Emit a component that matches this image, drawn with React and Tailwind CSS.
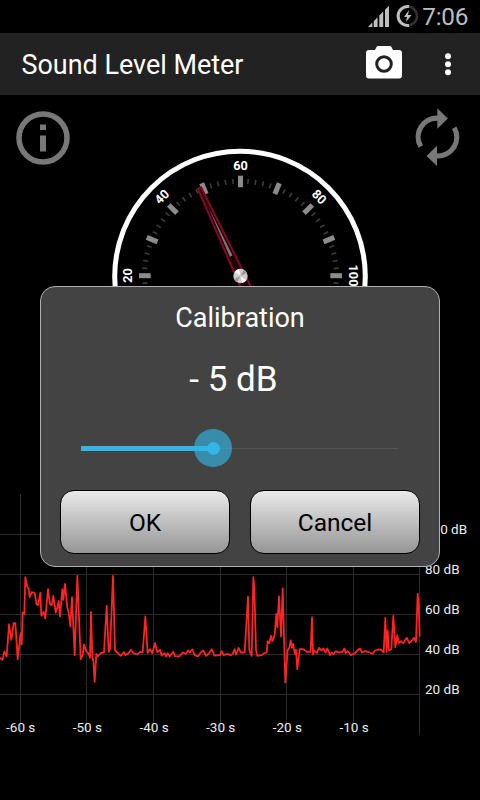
import React, { useState } from "react";

const TRACE =
    "0,292 8,298 13,273 20,288 27,192 34,238 41,188 46,188 53,296 62,218 65,252 68,156 73,160 76,50 82,80 86,84 89,110 95,95 104,98 110,132 114,134 121,97 124,166 131,154 136,174 144,86 150,132 155,134 160,106 167,156 172,140 176,122 180,168 187,86 190,118 195,70 202,142 206,155 211,198 216,110 224,284 232,46 242,296 248,284 252,252 258,270 266,280 270,292 273,154 277,290 280,300 284,364 289,280 293,288 302,278 312,276 320,136 326,274 330,266 339,46 345,270 352,276 362,286 372,275 376,284 384,280 393,268 400,278 412,282 420,274 428,276 436,168 443,278 450,266 457,278 465,248 472,275 480,268 485,285 494,278 498,288 503,278 509,288 520,274 525,287 538,288 548,276 558,280 564,270 570,276 577,267 584,284 594,288 602,276 610,270 618,286 626,280 635,266 643,285 660,284 665,272 671,284 682,280 692,284 698,280 704,266 708,282 716,262 722,276 734,276 744,108 748,268 755,286 760,50 763,80 768,268 772,286 785,284 792,278 800,276 803,242 808,248 813,226 817,242 824,224 829,160 832,200 837,108 843,228 848,84 856,366 863,268 868,262 872,240 876,262 879,250 885,280 888,268 892,326 899,266 910,266 920,274 932,274 936,170 939,282 943,270 950,278 957,262 964,270 970,264 977,276 982,264 990,284 996,276 1000,282 1008,272 1015,276 1028,274 1033,264 1037,278 1043,272 1053,284 1065,278 1072,270 1080,264 1086,276 1095,272 1110,276 1118,280 1125,270 1135,267 1144,268 1151,276 1156,172 1160,274 1163,210 1167,270 1174,266 1180,166 1186,260 1192,224 1196,248 1202,242 1210,248 1220,232 1228,248 1236,240 1242,232 1248,244 1253,100 1256,130 1259,228";

const StatusBar = () => {
    return (
        <div className="flex h-[33px] items-center justify-end pr-[12px] text-[#bebebe]">
            <svg width="55" height="33" viewBox="367 0 55 33">
                <path d="M368 27l4.300-4.400v4.400zM373.700 27v-5.800l3.900-3.900v9.700zM379.300 27v-11.500l3.900-3.900v15.400zM385 27v-17.200l4-4v21.200z" fill="#bebebe" />
                <circle cx="407.500" cy="16" r="9.500" fill="none" stroke="#333" strokeWidth="2.500" />
                <path d="M409 6.600A9.500 9.500 0 1 0 409 25.400" fill="none" stroke="#bebebe" strokeWidth="3" />
                <path d="M409 10l-5 7h3l-1 5 5.500-7h-3.500z" fill="#bebebe" />
            </svg>
            <span className="mt-px text-[24.300px] leading-none tracking-[-0.300px]">7:06</span>
        </div>
    );
};

const ActionBar = () => {
    return (
        <div className="flex h-[62px] items-center justify-between bg-[#222] pl-[21.500px]">
            <h1 className="mt-[2px] text-[26.950px] leading-none text-white">Sound Level Meter</h1>
            <svg width="120" height="62" viewBox="360 33 120 62">
                <path d="M369 50h6l1.500-3q.5-1 1.500-1h12q1 0 1.500 1l1.500 3h6q3 0 3 3v22.500q0 3-3 3h-30q-3 0-3-3v-22.500q0-3 3-3z" fill="#fff" />
                <circle cx="384" cy="64" r="7.300" fill="none" stroke="#222" strokeWidth="3" />
                <circle cx="448" cy="56.200" r="3" fill="#fff" />
                <circle cx="448" cy="64.200" r="3" fill="#fff" />
                <circle cx="448" cy="72.200" r="3" fill="#fff" />
            </svg>
        </div>
    );
};

const InfoIcon = () => (
    <svg width="54" height="54" viewBox="0 0 54 54">
        <circle cx="27" cy="27" r="24" fill="none" stroke="#787878" strokeWidth="5.500" />
        <path d="M24 13.500h6v5.500h-6zM24 24.500h6v16h-6z" fill="#787878" />
    </svg>
);

const SyncIcon = () => (
    <svg width="46" height="60" viewBox="414 107 46 60">
        <path
            d="M420.800 146.500A18.700 18.700 0 0 1 438.500 118.300M454.200 127.800A18.700 18.700 0 0 1 436.500 155.900"
            fill="none"
            stroke="#787878"
            strokeWidth="5.200"
        />
        <path d="M437.300 108.300l10.500 10.200-10.500 10.200zM437 145.700v20.400l-10.500-10.200z" fill="#787878" />
    </svg>
);

const Gauge = () => {
    const ticks = [];
    for (let i = -22; i <= 22; i++) {
        ticks.push({ angle: i * 4.5, major: i % 5 === 0 });
    }
    return (
        <svg className="h-[260px] w-[260px]" viewBox="110 146 260 260">
            <circle cx="240" cy="276.500" r="125.300" fill="none" stroke="#fff" strokeWidth="5" />
            <g transform="translate(240.500 275.700) scale(1.015 1)">
                {ticks.map(({ angle, major }) => (
                    <rect
                        key={angle}
                        x={major ? -2.5 : -0.8}
                        y={major ? -100 : -97}
                        width={major ? 5 : 1.6}
                        height={major ? 11.5 : 5}
                        fill={major ? "#8c8c8c" : "#3c3c3c"}
                        transform={`rotate(${angle})`}
                    />
                ))}
            </g>
            {[20, 40, 60, 80, 100].map((n) => (
                <text
                    key={n}
                    x="240.500"
                    y={170.3 - Math.abs(n - 60) * 0.08}
                    textAnchor="middle"
                    className="fill-white text-[12.700px] font-bold"
                    transform={`rotate(${(n - 60) * 2.25} 240.5 275.5)`}
                >
                    {n}
                </text>
            ))}
            <g transform="rotate(-25 240.500 276)">
                <path d="M238.700 179L235.700 291H245.300L242.300 179z" fill="#1c0007" stroke="#8a0426" strokeWidth="2" />
                <path d="M240.500 198L239 254h3z" fill="#777" />
            </g>
            <circle cx="240.500" cy="276" r="7.200" fill="#ccc" />
            <path d="M240.500 276L234.500 272A7.200 7.200 0 0 1 239 269zM240.500 276L246.500 280A7.200 7.200 0 0 1 242 283z" fill="#f4f4f4" />
            <path d="M240.500 276L244 269.700A7.200 7.200 0 0 1 247 273zM240.500 276L237 282.300A7.200 7.200 0 0 1 234 279z" fill="#999" />
        </svg>
    );
};

const HistoryChart = () => {
    return (
        <svg className="block h-[246px] w-[480px]" viewBox="0 494 480 246">
            <g stroke="#2b2b2b" strokeWidth="1">
                {[534, 574, 614, 654, 694].map((y) => (
                    <line key={y} x1="0" x2="420" y1={y + 0.5} y2={y + 0.5} />
                ))}
                {[20, 86, 153, 220, 286, 353, 419].map((x) => (
                    <line key={x} x1={x + 0.5} x2={x + 0.5} y1="494" y2="735" />
                ))}
            </g>
            <polyline
                points={TRACE}
                transform="translate(0 560.500) scale(.33333)"
                fill="none"
                stroke="#fb2323"
                strokeWidth="5.400"
                strokeLinejoin="round"
            />
            <g className="fill-[#eee] text-[13.500px]">
                {[100, 80, 60, 40, 20].map((db, i) => (
                    <text key={db} x="425" y={534 + i * 40}>{db} dB</text>
                ))}
                {[-60, -50, -40, -30, -20, -10].map((s, i) => (
                    <text key={s} x={20.7 + i * 66.67} y="731.500" textAnchor="middle">{s} s</text>
                ))}
            </g>
        </svg>
    );
};

const DialogButton = ({ children }) => (
    <button className="h-[64px] flex-1 rounded-[14px] border-[1.500px] border-black bg-linear-to-b from-[#eaeaea] to-[#969696] pt-[2px] text-[24.500px] text-black">
        {children}
    </button>
);

const CalibrationDialog = () => {
    const [offset] = useState(-5);
    const fill = ((offset + 17.2) / 29.2) * 100;

    return (
        <div className="absolute left-[40px] top-[286px] flex h-[281px] w-[400px] flex-col rounded-[15px] border border-[#b0b0b0] bg-[#434343] px-[19px] text-white">
            <h2 className="mt-[14px] text-center text-[27px] leading-[34px]">Calibration</h2>
            <p className="mt-[23px] pr-[13px] text-center text-[35px] leading-[44px]">
                {offset < 0 ? "-" : "+"} {Math.abs(offset)} dB
            </p>
            <div className="relative ml-[21px] mt-[27px] flex h-[38px] w-[317px] items-center">
                <div className="h-px w-full bg-[#555]" />
                <div className="absolute left-0 h-[5px] bg-[#33b5e5]" style={{ width: `${fill}%` }} />
                <div
                    className="absolute flex size-[38px] -translate-x-1/2 items-center justify-center rounded-full bg-[#33b5e5]/65"
                    style={{ left: `${fill}%` }}
                >
                    <div className="size-[13px] rounded-full bg-[#33b5e5]" />
                </div>
            </div>
            <div className="mt-[23px] flex gap-5">
                <DialogButton>OK</DialogButton>
                <DialogButton>Cancel</DialogButton>
            </div>
        </div>
    );
};

const App = () => {
    return (
        <div className="relative flex h-[800px] w-[480px] flex-col overflow-hidden bg-black font-['Roboto',sans-serif]">
            <StatusBar />
            <ActionBar />
            <div className="flex h-[399px] items-start pl-[15.500px] pt-[12px]">
                <div className="mt-[3.500px] w-[94.500px]"><InfoIcon /></div>
                <div className="mt-[39px] w-[260px] shrink-0"><Gauge /></div>
                <div className="ml-[44px] w-[46px]"><SyncIcon /></div>
            </div>
            <HistoryChart />
            <CalibrationDialog />
        </div>
    );
};

export default App;
